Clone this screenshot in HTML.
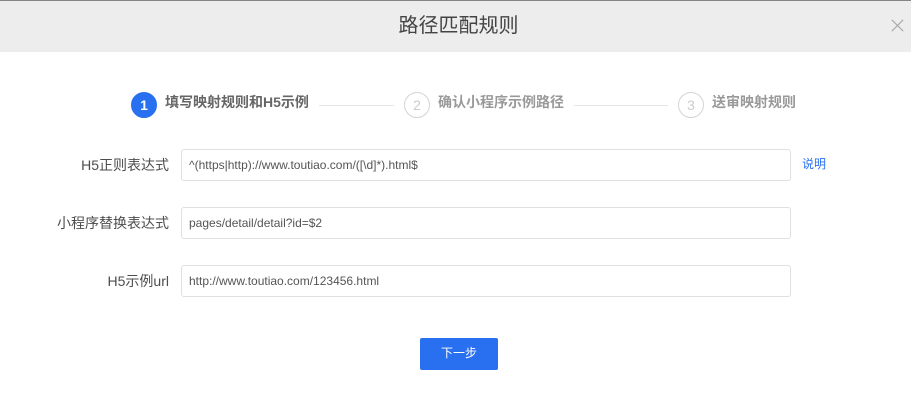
<!DOCTYPE html>
<html lang="zh"><head><meta charset="utf-8"><style>
html,body{margin:0;padding:0;background:#fff}
body{position:relative;width:911px;height:406px;overflow:hidden;font-family:"Liberation Sans","Noto Sans CJK SC",sans-serif;color:#555}
div,a,svg{position:absolute;box-sizing:border-box}
.t{white-space:nowrap}
.head{left:0;top:0;width:911px;height:52px;background:#ededed;border-top:1px solid #858585}
.title{left:0;top:13px;width:917px;text-align:center;font-size:20px;line-height:27px;color:#444}
.c{width:26px;height:26px;border-radius:50%;top:92px;text-align:center;font-size:14px;line-height:25px;border:1px solid #d4d4d4;color:#ccc}
.c.on{background:#2970f0;border-color:#2970f0;color:#fff;font-weight:bold}
.s{top:93px;font-size:14px;line-height:19px;font-weight:bold;color:#999}
.l{top:105px;height:1px;background:#e6e6e6}
.lb{right:742px;font-size:14px;line-height:20px;color:#4d4d4d;text-align:right}
.in{left:181px;width:610px;height:32px;border:1px solid #e0e0e0;border-radius:3px;font-size:12px;line-height:30px;padding-left:7px;color:#555}
.btn{left:420px;top:338px;width:78px;height:32px;background:#2970f0;border-radius:2px;color:#fff;font-size:12px;line-height:31px;text-align:center}
</style></head><body>
<div class="head"></div>
<div class="title t">路径匹配规则</div>
<svg style="left:891px;top:19px" width="13" height="13" viewBox="0 0 13 13"><path d="M.8.8l11.4 11.4M12.2.8L.8 12.2" stroke="#a8a8a8" stroke-width="1.1" fill="none"/></svg>
<div class="c on" style="left:131px">1</div>
<div class="s t" style="left:165px;color:#666">填写映射规则和H5示例</div>
<div class="l" style="left:319px;width:75px"></div>
<div class="c" style="left:404px">2</div>
<div class="s t" style="left:438px">确认小程序示例路径</div>
<div class="l" style="left:574px;width:94px"></div>
<div class="c" style="left:678px">3</div>
<div class="s t" style="left:712px">送审映射规则</div>
<div class="lb t" style="top:155px">H5正则表达式</div>
<div class="in t" style="top:149px">^(https|http)://www.toutiao.com/([\d]*).html$</div>
<a class="t" style="left:802px;top:155px;font-size:12px;line-height:18px;color:#2970f0">说明</a>
<div class="lb t" style="top:213px">小程序替换表达式</div>
<div class="in t" style="top:207px">pages/detail/detail?id=$2</div>
<div class="lb t" style="top:271px">H5示例url</div>
<div class="in t" style="top:265px">http://www.toutiao.com/123456.html</div>
<div class="btn t">下一步</div>
</body></html>
